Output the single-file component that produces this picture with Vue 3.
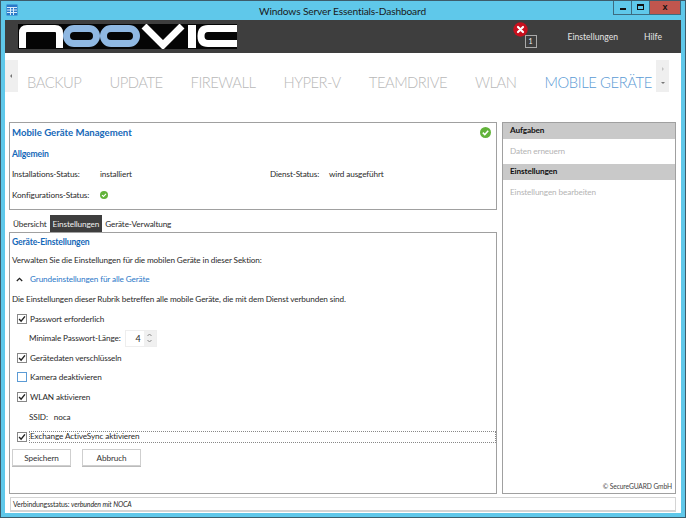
<template>
  <div class="window">
    <div class="titlebar">
      <svg class="app-icon" width="12" height="12" viewBox="0 0 12 12">
        <rect x="0.5" y="0.5" width="11" height="11" fill="#2a78c8" />
        <path d="M1 3.5h10M1 6h10M1 8.5h10M4.5 3.5V11M7.5 3.5V11" stroke="#d8ecfa" stroke-width="1" fill="none" />
      </svg>
      <span class="title">Windows Server Essentials-Dashboard</span>
      <div class="win-buttons">
        <button class="win-btn"><span class="min-glyph"></span></button>
        <button class="win-btn"><span class="max-glyph"></span></button>
        <button class="win-btn close">x</button>
      </div>
    </div>

    <div class="app">
      <header class="header">
        <svg class="logo" width="219" height="25" viewBox="0 0 219 25">
          <rect width="219" height="25" fill="#050505" />
          <g fill="none" stroke-width="7">
            <path d="M4.5 24V9Q4.5 4.5 9 4.5H37Q41.5 4.5 41.5 9V24" stroke="#fff" />
            <rect x="48.5" y="4.5" width="30" height="15" rx="7.5" stroke="#8fb8e2" />
            <rect x="85.5" y="4.5" width="33" height="15" rx="7.5" stroke="#8fb8e2" />
            <path d="M126 2L145 21L164 2" stroke="#fff" />
            <path d="M174 1V24" stroke="#fff" stroke-width="8" />
            <path d="M219 4.5H190Q183 4.5 183 12Q183 19.5 190 19.5H219" stroke="#fff" />
          </g>
        </svg>
        <div class="header-right">
          <div class="alert">
            <svg class="alert-icon" width="15" height="15" viewBox="0 0 15 15">
              <circle cx="7.5" cy="7.5" r="7.2" fill="#c8101e" />
              <path d="M5 5l5 5M10 5l-5 5" stroke="#fff" stroke-width="2.2" stroke-linecap="round" />
            </svg>
            <span class="alert-count">1</span>
          </div>
          <a class="head-link first">Einstellungen</a>
          <a class="head-link">Hilfe</a>
        </div>
      </header>

      <nav class="nav">
        <div class="scroll-left">
          <span class="tri-left"></span>
        </div>
        <div class="nav-items">
          <span
            v-for="item in navItems"
            :key="item"
            class="nav-item"
            :class="{ active: item === 'MOBILE GERÄTE' }"
          >{{ item }}</span>
        </div>
        <div class="scroll-right">
          <span class="tri-right"></span>
          <span class="tri-down"></span>
        </div>
      </nav>

      <main class="main">
        <section class="left">
          <div class="summary">
            <div class="summary-head">
              <h1>Mobile Geräte Management</h1>
              <svg class="ok big" width="11" height="11" viewBox="0 0 11 11">
                <circle cx="5.5" cy="5.5" r="5.5" fill="#62b33a" />
                <path d="M2.8 5.6l2 2 3.4-3.8" stroke="#fff" stroke-width="1.5" fill="none" />
              </svg>
            </div>
            <h2>Allgemein</h2>
            <div class="status-grid">
              <span>Installations-Status:</span>
              <span>installiert</span>
              <span>Dienst-Status:</span>
              <span>wird ausgeführt</span>
              <span>Konfigurations-Status:</span>
              <span class="ok-cell">
                <svg width="8" height="8" viewBox="0 0 11 11">
                  <circle cx="5.5" cy="5.5" r="5.5" fill="#62b33a" />
                  <path d="M2.8 5.6l2 2 3.4-3.8" stroke="#fff" stroke-width="1.6" fill="none" />
                </svg>
              </span>
            </div>
          </div>

          <div class="tabs">
            <span class="tab">Übersicht</span>
            <span class="tab selected">Einstellungen</span>
            <span class="tab">Geräte-Verwaltung</span>
          </div>

          <div class="panel">
            <h2 class="panel-title">Geräte-Einstellungen</h2>
            <p class="row">Verwalten Sie die Einstellungen für die mobilen Geräte in dieser Sektion:</p>
            <div class="row expander">
              <svg width="7" height="5" viewBox="0 0 7 5">
                <path d="M0.8 4L3.5 1.4L6.2 4" stroke="#222" stroke-width="1.3" fill="none" />
              </svg>
              <span>Grundeinstellungen für alle Geräte</span>
            </div>
            <p class="row">Die Einstellungen dieser Rubrik betreffen alle mobile Geräte, die mit dem Dienst verbunden sind.</p>

            <div
              v-for="opt in options"
              :key="opt.label"
              class="row-group"
            >
              <div class="row check-row" :class="{ focused: opt.focused }">
                <span class="checkbox" :class="{ empty: !opt.checked }">
                  <svg v-if="opt.checked" width="8" height="8" viewBox="0 0 9 9">
                    <path d="M1.2 4.5L3.5 7L7.8 1.6" stroke="#222" stroke-width="1.6" fill="none" />
                  </svg>
                </span>
                <span class="check-label">{{ opt.label }}</span>
              </div>
              <div v-if="opt.spinner" class="row sub-row">
                <span>Minimale Passwort-Länge:</span>
                <span class="spinner">
                  <span class="spin-value">4</span>
                  <span class="spin-arrows">
                    <svg width="5" height="4" viewBox="0 0 5 4"><path d="M0.5 3L2.5 1L4.5 3" stroke="#888" fill="none" /></svg>
                    <svg width="5" height="4" viewBox="0 0 5 4"><path d="M0.5 1L2.5 3L4.5 1" stroke="#888" fill="none" /></svg>
                  </span>
                </span>
              </div>
              <div v-if="opt.ssid" class="row sub-row ssid">
                <span>SSID:</span>
                <span>noca</span>
              </div>
            </div>

            <div class="actions">
              <button class="btn">Speichern</button>
              <button class="btn">Abbruch</button>
            </div>
          </div>
        </section>

        <aside class="tasks">
          <div class="task-head">Aufgaben</div>
          <div class="task-item">Daten erneuern</div>
          <div class="task-head">Einstellungen</div>
          <div class="task-item">Einstellungen bearbeiten</div>
          <div class="copyright">© SecureGUARD GmbH</div>
        </aside>
      </main>

      <footer class="statusbar">Verbindungsstatus: <em>verbunden mit NOCA</em></footer>
    </div>
  </div>
</template>

<script setup>
const navItems = ['BACKUP', 'UPDATE', 'FIREWALL', 'HYPER-V', 'TEAMDRIVE', 'WLAN', 'MOBILE GERÄTE']

const options = [
  { label: 'Passwort erforderlich', checked: true, spinner: true },
  { label: 'Gerätedaten verschlüsseln', checked: true },
  { label: 'Kamera deaktivieren', checked: false },
  { label: 'WLAN aktivieren', checked: true, ssid: true },
  { label: 'Exchange ActiveSync aktivieren', checked: true, focused: true }
]
</script>

<style>
html,
body {
  margin: 0;
  background: #5fc8ea;
}
</style>

<style scoped>
.window {
  width: 686px;
  height: 518px;
  box-sizing: border-box;
  border: 1px solid #3d5c6b;
  background: #5fc8ea;
  display: flex;
  flex-direction: column;
  font-family: Lato, "Open Sans", sans-serif;
  font-size: 8.2px;
  letter-spacing: -0.12px;
  color: #2a2a2a;
  overflow: hidden;
}

/* Titelleiste */
.titlebar {
  height: 19px;
  flex-shrink: 0;
  display: grid;
  grid-template-columns: 1fr auto 1fr;
  align-items: center;
  padding-left: 5px;
}

.app-icon {
  margin-top: -1px;
}

.title {
  font-size: 10.2px;
  letter-spacing: -0.15px;
  color: #1a1a1a;
  margin-right: 6px;
}

.win-buttons {
  justify-self: end;
  align-self: start;
  display: flex;
  margin-right: 4px;
  margin-top: -1px;
  height: 14px;
  border: 1px solid #3d6b80;
  border-top: none;
}

.win-btn {
  width: 18px;
  padding: 0;
  border: none;
  border-right: 1px solid #3d6b80;
  background: transparent;
  display: flex;
  align-items: center;
  justify-content: center;
}

.win-btn.close {
  width: 30px;
  border-right: none;
  background: #c0564e;
  font: bold 9px "Liberation Sans", sans-serif;
  color: #111;
}

.min-glyph {
  width: 6px;
  height: 2px;
  margin-top: 4px;
  background: #111;
}

.max-glyph {
  width: 5px;
  height: 3px;
  border: 1.5px solid #111;
  border-top-width: 2px;
}

.app {
  flex: 1;
  min-height: 0;
  margin: 0 4px 4px;
  background: #fff;
  display: flex;
  flex-direction: column;
}

/* Kopfbereich */
.header {
  height: 33px;
  flex-shrink: 0;
  background: #3e3e3e;
  display: flex;
  align-items: center;
  justify-content: space-between;
  padding-left: 13px;
}

.header-right {
  display: flex;
  align-items: center;
  color: #e4e4e4;
  font-size: 8.6px;
  letter-spacing: 0;
}

.alert {
  position: relative;
  width: 24px;
  height: 26px;
  margin-right: 31px;
  margin-top: -3px;
}

.alert-icon {
  position: absolute;
  left: 0;
  top: 0;
}

.alert-count {
  position: absolute;
  right: 0;
  bottom: 0;
  width: 12px;
  height: 13px;
  box-sizing: border-box;
  border: 1px solid #aaa;
  background: #3e3e3e;
  color: #eee;
  font-size: 7px;
  line-height: 11px;
  text-align: center;
}

.head-link {
  margin-right: 19px;
}

.head-link.first {
  margin-right: 26px;
}

/* Navigation */
.nav {
  height: 69px;
  flex-shrink: 0;
  display: flex;
  align-items: flex-start;
  padding: 7px 12px 0 0;
  box-sizing: border-box;
}

.scroll-left,
.scroll-right {
  width: 13px;
  height: 32px;
  background: #efefef;
  display: flex;
  flex-direction: column;
  align-items: center;
  flex-shrink: 0;
}

.scroll-left {
  justify-content: center;
}

.scroll-right {
  justify-content: space-between;
  padding: 7px 0 6px;
  box-sizing: border-box;
}

.tri-left {
  border: 2.5px solid transparent;
  border-right-color: #777;
  margin-left: -3px;
}

.tri-right {
  border: 2.5px solid transparent;
  border-left-color: #c4c4c4;
  margin-left: 3px;
}

.tri-down {
  border: 2.5px solid transparent;
  border-top-color: #777;
  margin-top: 3px;
}

.nav-items {
  flex: 1;
  min-width: 0;
  display: flex;
  gap: 28px;
  padding-left: 9px;
  font-size: 14.8px;
  letter-spacing: -0.5px;
  line-height: 22px;
  margin-top: 11px;
  white-space: nowrap;
}

.nav-item {
  color: #b8b8b8;
  font-weight: 300;
}

.nav-item.active {
  color: #5b9bd5;
  letter-spacing: -0.4px;
}

.main {
  flex: 1;
  min-height: 0;
  display: flex;
  gap: 5px;
  padding: 0 5px 0 4px;
}

.left {
  width: 488px;
  flex-shrink: 0;
  display: flex;
  flex-direction: column;
}

/* Zusammenfassung */
.summary {
  height: 88px;
  box-sizing: border-box;
  border: 1px solid #a0a0a0;
  padding: 2px 2px 0;
}

.summary-head {
  display: flex;
  justify-content: space-between;
  align-items: center;
  height: 14px;
  padding-right: 3px;
}

h1 {
  margin: 0;
  font-size: 9.6px;
  letter-spacing: 0;
  font-weight: 700;
  color: #1568b8;
}

h2 {
  margin: 0;
  font-size: 8.6px;
  letter-spacing: -0.15px;
  font-weight: 700;
  color: #1568b8;
}

.summary h2 {
  margin-top: 9px;
  line-height: 12px;
}

.status-grid {
  display: grid;
  grid-template-columns: 88px 170px 59px 1fr;
  grid-auto-rows: 21px;
  margin-top: 3px;
  align-items: center;
}

.ok-cell {
  display: flex;
  grid-column: 2 / 5;
}

/* Reiter */
.tabs {
  height: 17px;
  margin-top: 5px;
  flex-shrink: 0;
  display: flex;
  align-items: stretch;
  padding-left: 1px;
}

.tab {
  padding: 0 3px;
  line-height: 18px;
}

.tab.selected {
  background: #3e3e3e;
  color: #f0f0f0;
}

.panel {
  flex: 1;
  min-height: 0;
  margin-bottom: 3px;
  border: 1px solid #a0a0a0;
  padding: 3px 1px 0 2px;
  display: flex;
  flex-direction: column;
}

.panel-title {
  line-height: 12px;
}

.row {
  margin: 0;
  height: 19.6px;
  display: flex;
  align-items: center;
}

.panel-title + .row {
  margin-top: 2px;
}

.expander {
  gap: 7px;
  padding-left: 4px;
  color: #2a78c8;
}

.check-row {
  padding-left: 5px;
  gap: 3px;
}

.check-row.focused {
  height: 10px;
  margin-top: 6px;
  margin-bottom: 4px;
}

.check-row.focused .check-label {
  flex: 1;
  height: 10px;
  line-height: 9px;
  box-sizing: border-box;
  outline: 1px dotted #888;
}

.checkbox {
  width: 8px;
  height: 8px;
  border: 1px solid #888;
  background: #fff;
  display: flex;
  align-items: center;
  justify-content: center;
  flex-shrink: 0;
}

.checkbox.empty {
  border-color: #5b9bd5;
}

.sub-row {
  padding-left: 17px;
  gap: 5px;
}

.ssid {
  gap: 6px;
}

.spinner {
  width: 32px;
  height: 17px;
  display: flex;
  border: 1px solid #eee;
  box-sizing: border-box;
  margin-left: -1px;
}

.spin-value {
  flex: 1;
  text-align: right;
  padding-right: 3px;
  line-height: 15px;
  font-size: 9px;
}

.spin-arrows {
  width: 12px;
  background: #f0f0f0;
  display: flex;
  flex-direction: column;
  align-items: center;
  justify-content: center;
  gap: 2px;
}

.actions {
  display: flex;
  gap: 11px;
  margin-top: 3px;
}

.btn {
  width: 59px;
  height: 17px;
  padding: 0;
  background: #fff;
  border: 1px solid #cfcfcf;
  box-shadow: 0 1px 0 #bbb;
  font: inherit;
  letter-spacing: inherit;
  color: #333;
}

/* Aufgabenleiste */
.tasks {
  width: 174px;
  margin-bottom: 3px;
  box-sizing: border-box;
  border: 1px solid #a0a0a0;
  display: flex;
  flex-direction: column;
}

.task-head {
  height: 16px;
  line-height: 15px;
  flex-shrink: 0;
  background: #c9c9c9;
  color: #111;
  font-weight: 700;
  padding-left: 7px;
}

.task-item {
  height: 24.5px;
  line-height: 24px;
  flex-shrink: 0;
  padding-left: 7px;
  color: #b4b4b4;
}

.copyright {
  margin-top: auto;
  text-align: right;
  font-size: 6.7px;
  padding: 0 3px 3px 0;
  color: #444;
}

.statusbar {
  height: 15px;
  flex-shrink: 0;
  box-sizing: border-box;
  margin: 0 5px 1px 5px;
  border: 1px solid #d4d4d4;
  border-bottom: 2px solid #d4d4d4;
  font-size: 7px;
  line-height: 12px;
  padding-left: 2px;
}
</style>
